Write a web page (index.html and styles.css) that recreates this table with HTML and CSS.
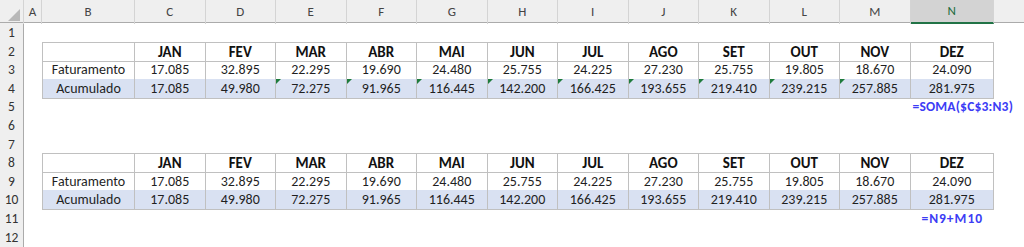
FILE: index.html
```html
<!DOCTYPE html>
<html lang="pt">
<head>
<meta charset="utf-8">
<title>Acumulado</title>
<link rel="stylesheet" href="styles.css">
</head>
<body>
<div class="sheet">
  <div class="row head">
    <div class="corner"><span class="tri"></span></div>
    <div class="ch">A</div><div class="ch">B</div><div class="ch">C</div><div class="ch">D</div><div class="ch">E</div><div class="ch">F</div><div class="ch">G</div><div class="ch">H</div><div class="ch">I</div><div class="ch">J</div><div class="ch">K</div><div class="ch">L</div><div class="ch">M</div><div class="ch sel">N</div><div class="ch rest"></div>
  </div>

  <div class="row"><div class="rh">1</div></div>

  <div class="row">
    <div class="rh">2</div><div></div>
    <div class="t top first"></div>
    <div class="t top b">JAN</div><div class="t top b">FEV</div><div class="t top b">MAR</div><div class="t top b">ABR</div><div class="t top b">MAI</div><div class="t top b">JUN</div><div class="t top b">JUL</div><div class="t top b">AGO</div><div class="t top b">SET</div><div class="t top b">OUT</div><div class="t top b">NOV</div><div class="t top b">DEZ</div>
  </div>
  <div class="row">
    <div class="rh">3</div><div></div>
    <div class="t first">Faturamento</div>
    <div class="t">17.085</div><div class="t">32.895</div><div class="t">22.295</div><div class="t">19.690</div><div class="t">24.480</div><div class="t">25.755</div><div class="t">24.225</div><div class="t">27.230</div><div class="t">25.755</div><div class="t">19.805</div><div class="t">18.670</div><div class="t">24.090</div>
  </div>
  <div class="row">
    <div class="rh">4</div><div></div>
    <div class="t first blue">Acumulado</div>
    <div class="t blue">17.085</div><div class="t blue">49.980</div><div class="t blue flag">72.275</div><div class="t blue flag">91.965</div><div class="t blue flag">116.445</div><div class="t blue flag">142.200</div><div class="t blue flag">166.425</div><div class="t blue flag">193.655</div><div class="t blue flag">219.410</div><div class="t blue flag">239.215</div><div class="t blue flag">257.885</div><div class="t blue">281.975</div>
  </div>
  <div class="row">
    <div class="rh">5</div>
    <div class="formula left">=SOMA($C$3:N3)</div>
  </div>
  <div class="row"><div class="rh">6</div></div>
  <div class="row"><div class="rh">7</div></div>

  <div class="row">
    <div class="rh">8</div><div></div>
    <div class="t top first"></div>
    <div class="t top b">JAN</div><div class="t top b">FEV</div><div class="t top b">MAR</div><div class="t top b">ABR</div><div class="t top b">MAI</div><div class="t top b">JUN</div><div class="t top b">JUL</div><div class="t top b">AGO</div><div class="t top b">SET</div><div class="t top b">OUT</div><div class="t top b">NOV</div><div class="t top b">DEZ</div>
  </div>
  <div class="row">
    <div class="rh">9</div><div></div>
    <div class="t first">Faturamento</div>
    <div class="t">17.085</div><div class="t">32.895</div><div class="t">22.295</div><div class="t">19.690</div><div class="t">24.480</div><div class="t">25.755</div><div class="t">24.225</div><div class="t">27.230</div><div class="t">25.755</div><div class="t">19.805</div><div class="t">18.670</div><div class="t">24.090</div>
  </div>
  <div class="row">
    <div class="rh">10</div><div></div>
    <div class="t first blue">Acumulado</div>
    <div class="t blue">17.085</div><div class="t blue">49.980</div><div class="t blue">72.275</div><div class="t blue">91.965</div><div class="t blue">116.445</div><div class="t blue">142.200</div><div class="t blue">166.425</div><div class="t blue">193.655</div><div class="t blue">219.410</div><div class="t blue">239.215</div><div class="t blue">257.885</div><div class="t blue">281.975</div>
  </div>
  <div class="row">
    <div class="rh">11</div>
    <div class="formula center">=N9+M10</div>
  </div>
  <div class="row"><div class="rh">12</div></div>
</div>
</body>
</html>
```

FILE: styles.css
```css
* { box-sizing: border-box; }

html, body {
  margin: 0;
  padding: 0;
  background: #ffffff;
}

body {
  font-family: Carlito, Lato, "Liberation Sans", sans-serif;
  color: #1f1f1f;
  overflow: hidden;
}

.sheet {
  width: 1024px;
  height: 247px;
}

.row {
  display: grid;
  grid-template-columns: 24px 18px 93px repeat(11, 70.5px) 83.5px 1fr;
  height: 18.6px;
}

.row.head {
  height: 23px;
  background: #efefef;
  border-bottom: 1px solid #ababab;
}

.corner {
  position: relative;
  border-right: 1px solid #d4d4d4;
}

.corner .tri {
  position: absolute;
  right: 3px;
  bottom: 3px;
  width: 0;
  height: 0;
  border-left: 12px solid transparent;
  border-bottom: 12px solid #b8b8b8;
}

.ch {
  border-right: 1px solid #d4d4d4;
  font-size: 13px;
  color: #444444;
  text-align: center;
  line-height: 23px;
}

.ch.sel {
  background: #d3d3d3;
  color: #1d6b3c;
  border-bottom: 2px solid #217346;
  line-height: 22px;
}

.ch.rest {
  border-right: none;
}

.rh {
  grid-column: 1;
  background: #efefef;
  border-right: 1px solid #ababab;
  border-bottom: 1px solid #d9d9d9;
  font-size: 13.5px;
  color: #333333;
  text-align: center;
  line-height: 19px;
}

.t {
  position: relative;
  border-right: 1px solid #c0c0c0;
  border-bottom: 1px solid #c0c0c0;
  font-size: 14px;
  text-align: center;
  line-height: 19px;
  white-space: nowrap;
}

.t.first {
  border-left: 1px solid #c0c0c0;
}

.t.top {
  border-top: 1px solid #c0c0c0;
  line-height: 18px;
}

.t.b {
  font-weight: bold;
  font-size: 15px;
  color: #111111;
}

.t.blue {
  background: #d9e1f2;
}

.t.flag::before {
  content: "";
  position: absolute;
  left: 0;
  top: 0;
  width: 0;
  height: 0;
  border-top: 5px solid #1e7b3c;
  border-right: 5px solid transparent;
}

.formula {
  grid-column: 15;
  font-weight: bold;
  color: #3c3cf5;
  font-size: 13.5px;
  line-height: 20px;
  white-space: nowrap;
}

.formula.left {
  padding-left: 2px;
  text-align: left;
  letter-spacing: 0.2px;
}

.formula.center {
  text-align: center;
  letter-spacing: 1px;
}
```
